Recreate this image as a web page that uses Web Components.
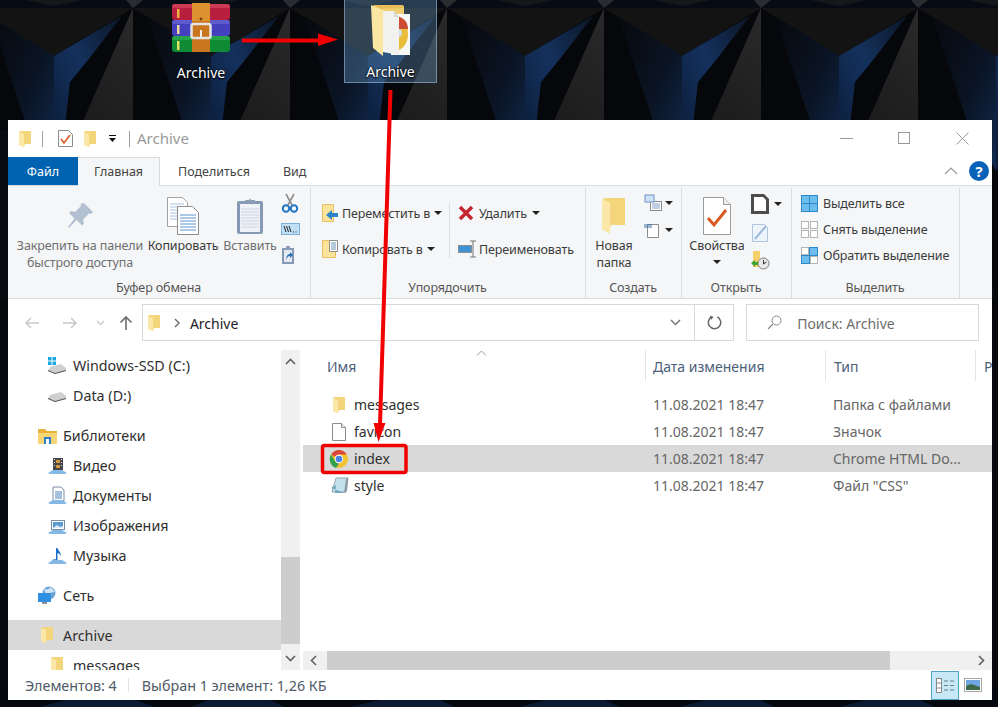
<!DOCTYPE html>
<html lang="ru">
<head>
<meta charset="utf-8">
<title>Archive</title>
<style>
  html, body { margin: 0; height: 100%; }
  body { width: 998px; height: 707px; overflow: hidden; position: relative; background: #07090e; font: 13px/17px "Noto Sans", "Open Sans", sans-serif; color: #3b3b3b; }
</style>
</head>
<body>
<desk-wallpaper></desk-wallpaper>
<desk-icon style="left:155px;top:0" label="Archive"><ex-icon name="rar" size="60x50"></ex-icon></desk-icon>
<desk-icon style="left:345px;top:0" label="Archive" selected><ex-icon name="bigfolder" size="40x53"></ex-icon></desk-icon>

<ex-window>
  <ex-titlebar title-text="Archive"></ex-titlebar>
  <ex-tabs></ex-tabs>
  <ex-ribbon>
    <rb-group label="Буфер обмена" style="width:302px">
      <rb-big style="margin-left:9px;width:126px;white-space:nowrap" dim><ex-icon slot="icon" name="pin" size="28x28"></ex-icon>Закрепить на панели<br>быстрого доступа</rb-big>
      <rb-big style="margin-left:4px;width:72px"><ex-icon slot="icon" name="copy" size="32x38"></ex-icon>Копировать</rb-big>
      <rb-big style="margin-left:5px;width:52px" dim><ex-icon slot="icon" name="paste" size="28x38"></ex-icon>Вставить</rb-big>
      <rb-col style="margin-left:5px;width:20px;padding-top:2px" gap="26">
        <rb-small><ex-icon name="scissors" size="18x20"></ex-icon></rb-small>
        <rb-small><ex-icon name="pathcopy" size="19x12"></ex-icon></rb-small>
        <rb-small><ex-icon name="shortcut" size="14x20"></ex-icon></rb-small>
      </rb-col>
    </rb-group>
    <rb-group label="Упорядочить" style="width:274px">
      <rb-col style="margin-left:11px;width:127px;padding-top:7px" gap="36">
        <rb-small gap="4"><ex-icon name="moveto" size="16x18"></ex-icon>Переместить в<rb-caret></rb-caret></rb-small>
        <rb-small gap="4"><ex-icon name="copyto" size="16x18"></ex-icon>Копировать в<rb-caret></rb-caret></rb-small>
      </rb-col>
      <rb-sep></rb-sep>
      <rb-col style="margin-left:8px;padding-top:7px" gap="36">
        <rb-small gap="5"><ex-icon name="del" size="16x16"></ex-icon>Удалить<rb-caret></rb-caret></rb-small>
        <rb-small gap="3"><ex-icon name="rename" size="18x18"></ex-icon>Переименовать</rb-small>
      </rb-col>
    </rb-group>
    <rb-group label="Создать" style="width:95px">
      <rb-big style="margin-left:3px;width:50px"><ex-icon slot="icon" name="newfolder" size="24x36"></ex-icon>Новая папка</rb-big>
      <rb-col style="margin-left:5px;padding-top:1px" gap="27">
        <rb-small gap="3"><ex-icon name="newitem" size="18x17"></ex-icon><rb-caret></rb-caret></rb-small>
        <rb-small gap="3"><ex-icon name="easy" size="18x17"></ex-icon><rb-caret></rb-caret></rb-small>
      </rb-col>
    </rb-group>
    <rb-group label="Открыть" style="width:109px">
      <rb-big style="margin-left:7px;width:56px"><ex-icon slot="icon" name="props" size="28x38"></ex-icon>Свойства<rb-caret block></rb-caret></rb-big>
      <rb-col style="margin-left:5px;padding-top:2px" gap="28">
        <rb-small gap="4"><ex-icon name="open" size="20x20"></ex-icon><rb-caret></rb-caret></rb-small>
        <rb-small gap="4"><ex-icon name="edit" size="20x20"></ex-icon></rb-small>
        <rb-small gap="4"><ex-icon name="history" size="20x20"></ex-icon></rb-small>
      </rb-col>
    </rb-group>
    <rb-group label="Выделить" style="width:167px">
      <rb-col style="margin-left:9px;padding-top:2px" gap="26">
        <rb-small gap="5"><ex-icon name="selall" size="17x17"></ex-icon>Выделить все</rb-small>
        <rb-small gap="5"><ex-icon name="selnone" size="17x17"></ex-icon>Снять выделение</rb-small>
        <rb-small gap="5"><ex-icon name="selinv" size="17x17"></ex-icon>Обратить выделение</rb-small>
      </rb-col>
    </rb-group>
  </ex-ribbon>
  <ex-addressbar path="Archive" search="Поиск: Archive"></ex-addressbar>
  <ex-main>
    <nav-pane slot="nav">
      <nav-item level="1" icon="drivec" size="20x18">Windows-SSD (C:)</nav-item>
      <nav-item level="1" icon="drived" size="20x18">Data (D:)</nav-item>
      <nav-item level="0" icon="libs" size="19x17" spaced>Библиотеки</nav-item>
      <nav-item level="1" icon="video" size="19x19">Видео</nav-item>
      <nav-item level="1" icon="docs" size="19x19">Документы</nav-item>
      <nav-item level="1" icon="pics" size="19x19">Изображения</nav-item>
      <nav-item level="1" icon="music" size="19x19">Музыка</nav-item>
      <nav-item level="0" icon="net" size="19x19" spaced>Сеть</nav-item>
      <nav-item level="0" icon="folder" size="12x16" spaced selected>Archive</nav-item>
      <nav-item level="1" icon="folder" size="12x16">messages</nav-item>
    </nav-pane>
    <file-list slot="files">
      <file-row icon="folder" size="12x16" name="messages" date="11.08.2021 18:47" type="Папка с файлами"></file-row>
      <file-row icon="file" size="14x18" name="favicon" date="11.08.2021 18:47" type="Значок"></file-row>
      <file-row icon="chrome" size="18x18" name="index" date="11.08.2021 18:47" type="Chrome HTML Do..." selected></file-row>
      <file-row icon="css" size="19x17" name="style" date="11.08.2021 18:47" type="Файл &quot;CSS&quot;"></file-row>
    </file-list>
  </ex-main>
  <ex-status count="Элементов: 4" sel="Выбран 1 элемент: 1,26 КБ"></ex-status>
</ex-window>

<red-marks></red-marks>

<script>
const ICONS = {
  folder: `<path d="M1 0h11v13H6l-1 3-5-2V1z" fill="#f3d57c"/><path d="M0 1l5 2v13l-5-2z" fill="#fbe8a8"/>`,
  rar: `<rect x="1" y="1" width="58" height="16" rx="3" fill="#b81f3e"/><rect x="1" y="17" width="58" height="16" rx="3" fill="#4540bd"/><rect x="1" y="33" width="58" height="16" rx="3" fill="#0f8a35"/>
    <rect x="1" y="1" width="58" height="4" rx="2" fill="#e0566c" opacity=".5"/><rect x="1" y="17" width="58" height="4" rx="2" fill="#7a74e0" opacity=".5"/><rect x="1" y="33" width="58" height="4" rx="2" fill="#3dbb62" opacity=".5"/>
    <rect x="6" y="6" width="2.5" height="9" fill="#f0b040"/><rect x="6" y="22" width="2.5" height="9" fill="#f0d8a0"/><rect x="6" y="38" width="2.5" height="9" fill="#e8e060"/>
    <rect x="21" y="0" width="18" height="49" fill="#c9761f"/><rect x="21" y="0" width="18" height="18" fill="#eba53c" opacity=".6"/><rect x="20.500" y="21" width="19" height="14" rx="2" fill="none" stroke="#e4e4e4" stroke-width="2.500"/><rect x="29" y="27" width="2" height="7" fill="#eee"/><circle cx="30" cy="16" r="1.400" fill="#7a3f08"/>`,
  bigfolder: `<path d="M2 3h31v40H2z" fill="#f0cd6e"/><path d="M2 3l1-1h29l1 3-31 1z" fill="#e7bd58"/><path d="M20 11h19v41H20z" fill="#f7f7f6"/><path d="M23 13c9 0 14 8 14 18s-6 17-14 17z" fill="#e9bc3c"/><path d="M23 13c8 0 14 5 14 13H23z" fill="#cd4a34"/><circle cx="27" cy="30" r="4" fill="#cfe0ee"/><path d="M12 8h11l5 6v38l-16-3z" fill="#f1f1f0"/><path d="M23 8v6h5z" fill="#d8d8d8"/><path d="M0 2l12 5v46L2 45z" fill="#fbe7a2"/>`,
  pin: `<path d="M18 1l9 9-2 2-2-.5-6 6 1 4-2 2-5.500-5.500L3 26l-1-1 6.500-8.500L3 11l2-2 4 1 6-6-.5-2z" fill="#b3c0d2"/>`,
  copy: `<path d="M.5.500h15l5 5v24H.5z" fill="#fff" stroke="#a3a3a3"/><path d="M3 7h14M3 10h14M3 13h14M3 16h14M3 19h14M3 22h14" stroke="#a6c3e4"/><path d="M10.500 9.500h15l6 6v22h-21z" fill="#fff" stroke="#8d8d8d"/><path d="M13 18h16M13 21h16M13 24h16M13 27h16M13 30h16M13 33h16" stroke="#5d94d2"/>`,
  paste: `<rect x="1" y="4" width="26" height="33" rx="2" fill="#8599b4"/><rect x="4" y="7" width="20" height="28" fill="#eef1f6"/><path d="M5 12h18M5 15h18M5 18h18M5 21h18M5 24h18M5 27h18M5 30h18" stroke="#cdd5e2"/><path d="M9 6V3h4l1-2 1 2h4v3z" fill="#8d9fb8"/>`,
  scissors: `<path d="M5 1l6 11M13 1L7 12" stroke="#8f8f8f" stroke-width="1.600" fill="none"/><circle cx="5" cy="15.500" r="3.200" fill="none" stroke="#1f77c4" stroke-width="2"/><circle cx="13" cy="15.500" r="3.200" fill="none" stroke="#1f77c4" stroke-width="2"/>`,
  pathcopy: `<rect x=".5" y=".5" width="18" height="11" fill="#bfe0f6" stroke="#7fb0d8"/><path d="M3 3l2 6M5.500 3l2 6M8 3l2 6" stroke="#222" stroke-width="1"/><path d="M12 9h1M14.500 9h1" stroke="#222"/>`,
  shortcut: `<rect x="1" y="3" width="12" height="16" fill="#8599b4"/><rect x="3" y="5" width="8" height="12" fill="#e4e9f1"/><path d="M5 1h4v3H5z" fill="#8d9fb8"/><path d="M5 15c0-4 2-6 4-6V7l3 3-3 3v-2c-2 0-3 1-4 4z" fill="#2f6fb5"/>`,
  moveto: `<path d="M.5.500h11v17H.5z" fill="#fbe39a" stroke="#e8c060"/><path d="M16 9h-6V6l-6 5 6 5v-3h6z" fill="#2b83c9"/>`,
  copyto: `<path d="M.5.500h13v17H.5z" fill="#fbe39a" stroke="#e8c060"/><path d="M7.500.500h8v11h-8z" fill="#fff" stroke="#8d8d8d"/><path d="M9 3h5M9 5h5M9 7h5M9 9h5" stroke="#6a90b8"/>`,
  del: `<path d="M2 2l12 12M14 2L2 14" stroke="#c3242f" stroke-width="3.400"/>`,
  rename: `<rect x=".5" y="5.500" width="13" height="7" fill="#3f93d8" stroke="#8d8d8d"/><path d="M15 1v16M12 1h6M12 17h6" stroke="#777" fill="none"/>`,
  newfolder: `<path d="M3 0h20v27H9l-2 8-7-4V2z" fill="#f3d57c"/><path d="M0 1l8 4v30l-8-4z" fill="#fbe8a8"/>`,
  newitem: `<rect x="6.500" y="7.500" width="11" height="9" fill="#fff" stroke="#8c8c8c"/><path d="M8 10h8M8 12h8M8 14h8" stroke="#7f9fc8"/><rect x="1" y="1" width="9" height="7" fill="#cfe2f5" stroke="#6d96c6"/>`,
  easy: `<path d="M3.500 3.500h11v13h-11z" fill="#fff" stroke="#8c8c8c"/><path d="M0 4h8M0 6h8" stroke="#3a6fae"/>`,
  props: `<path d="M.5.500h20l7 7v30H.5z" fill="#fff" stroke="#9a9a9a"/><path d="M20.500.500v7h7" fill="#eee" stroke="#9a9a9a"/><path d="M5 21l6 7L23 13" fill="none" stroke="#d85a22" stroke-width="3"/>`,
  open: `<path d="M1 0h13l5 5v15H1z" fill="#4d4d4d"/><path d="M4 3h9l3 3v11H4z" fill="#fff"/>`,
  edit: `<path d="M2.500 2.500h12l3 3v14h-15z" fill="#eef4fb" stroke="#b0c4dc"/><path d="M5 17L16 4" stroke="#9db9d8" stroke-width="2"/>`,
  history: `<path d="M3 1h7v16H3z" fill="#f5cf6a"/><circle cx="13.500" cy="13.500" r="5.500" fill="#e8e8e8" stroke="#7a7a7a"/><path d="M13.500 10v4l3-2" fill="none" stroke="#333"/><path d="M1 13l4-3v2h3v3H5v2z" fill="#3fa52f"/>`,
  selall: `<g fill="#6cbcee" stroke="#2d8ac8"><rect x=".5" y=".5" width="8" height="8"/><rect x="8.500" y=".5" width="8" height="8"/><rect x=".5" y="8.500" width="8" height="8"/><rect x="8.500" y="8.500" width="8" height="8"/></g>`,
  selnone: `<g fill="#fff" stroke="#b5b5b5"><rect x=".5" y=".5" width="7" height="7"/><rect x="9.500" y=".5" width="7" height="7"/><rect x=".5" y="9.500" width="7" height="7"/><rect x="9.500" y="9.500" width="7" height="7"/></g>`,
  selinv: `<g stroke="#2d8ac8"><rect x=".5" y=".5" width="7" height="7" fill="#fff" stroke="#b5b5b5"/><rect x="8.500" y=".5" width="8" height="8" fill="#6cbcee"/><rect x=".5" y="8.500" width="8" height="8" fill="#6cbcee"/><rect x="9.500" y="9.500" width="7" height="7" fill="#fff" stroke="#b5b5b5"/></g>`,
  drivec: `<path d="M3 11l11-3 5 4v3l-11 3-7-3z" fill="#cfcfcf"/><path d="M1 14l7 3 11-3v1l-11 3-7-3z" fill="#555"/><path d="M1 1h3.500v3.500H1zM5.500 1H9v3.500H5.500zM1 5.500h3.500V9H1zM5.500 5.500H9V9H5.500z" fill="#18a9e0"/>`,
  drived: `<path d="M3 9l11-3 5 4v3l-11 3-7-3z" fill="#cfcfcf"/><path d="M1 12l7 3 11-3v1l-11 3-7-3z" fill="#555"/>`,
  libs: `<path d="M0 2h7l2 2h10v3H0z" fill="#e9b33a"/><path d="M0 6h19v11H0z" fill="#f8d675"/><path d="M6 10h7v7H6z" fill="#2f7dc4"/><path d="M8 12h3v5H8z" fill="#fff"/>`,
  video: `<path d="M5 2h10v12H5z" fill="#46474d"/><path d="M8 4h4v3H8zM8 9h4v3H8z" fill="#d39b3a"/><path d="M6 3h1v1H6zM6 6h1v1H6zM6 9h1v1H6zM13 3h1v1h-1zM13 6h1v1h-1zM13 9h1v1h-1z" fill="#ddd"/><path d="M0 17l5-3h9l5 3-2 1H2z" fill="#84b9e6"/>`,
  docs: `<path d="M5 1h8l3 3v11H5z" fill="#fff" stroke="#7a8ea8"/><path d="M7 6h7M7 8h7M7 10h7M7 12h7" stroke="#4b82bd"/><path d="M0 17l5-3h9l5 3-2 1H2z" fill="#84b9e6"/>`,
  pics: `<rect x="3.500" y="4.500" width="13" height="9" fill="#fff" stroke="#7a8ea8"/><rect x="5" y="6" width="10" height="6" fill="#5a9bd0"/><path d="M5 12l4-3 3 2 3-1v2z" fill="#dce9f2"/><path d="M0 17l5-3h9l5 3-2 1H2z" fill="#84b9e6"/>`,
  music: `<path d="M8 2h1.500c.5 3 4 4 3 8-.5-2-2-3-3-3v7c0 2-2 3-4 3s-2-3 0-3.500c1-.3 2-.3 2.500 0z" fill="#1a6fc8"/><path d="M0 17l5-3h9l5 3-2 1H2z" fill="#84b9e6"/>`,
  net: `<circle cx="11" cy="7" r="6.500" fill="#6aa4d8"/><path d="M6 3c3 1 5 0 7-2 1 2 3 3 4 5-3 0-6 1-7 4-2-1-3-4-4-7z" fill="#cfe2f2"/><rect x="0" y="7" width="13" height="9" fill="#2f8fe0"/><path d="M4 16h5v2H4z" fill="#8d8d8d"/>`,
  file: `<path d="M.5.500h9l4 4v13H.5z" fill="#fff" stroke="#8c8c8c"/><path d="M9.500.500v4h4" fill="#eee" stroke="#8c8c8c"/>`,
  chrome: `<circle cx="9" cy="9" r="9" fill="#f4c430"/><path d="M9 0a9 9 0 0 1 7.800 4.500H9a4.500 4.500 0 0 0-3.900 2.200L1.200 4.500A9 9 0 0 1 9 0z" fill="#d9473c"/><path d="M1.200 4.500L5.100 11.200A4.500 4.500 0 0 0 9 13.500L6 18a9 9 0 0 1-4.800-13.500z" fill="#32a04f"/><circle cx="9" cy="9" r="4.200" fill="#fff"/><circle cx="9" cy="9" r="3.300" fill="#4a84e6"/>`,
  css: `<path d="M6 1h12l-2 14H2z" fill="#c3e2ee" stroke="#8fa6b0"/><path d="M1 11l5-3-1 8h10" fill="#6fa8bc"/><path d="M16 2l2-1-1 13-3 2z" fill="#8b9aa3"/>`
};

// shared icon element, size is given as "WxH"
class ExIcon extends HTMLElement {
  connectedCallback() {
    const [w, h] = this.getAttribute("size").split("x");
    const root = this.shadowRoot || this.attachShadow({ mode: "open" });
    root.innerHTML = `<style>:host{display:block;flex:none;width:${w}px;height:${h}px}svg{display:block;overflow:visible}</style>
      <svg width="${w}" height="${h}" viewBox="0 0 ${w} ${h}">${ICONS[this.getAttribute("name")] || ""}</svg>`;
  }
}
customElements.define("ex-icon", ExIcon);

class DeskWallpaper extends HTMLElement {
  constructor() {
    super();
    this.attachShadow({ mode: "open" }).innerHTML = `
    <style>:host{position:absolute;inset:0;display:block}svg{display:block}</style>
    <svg width="998" height="707">
      <defs>
        <linearGradient id="b1" x1="0" y1="0" x2="1" y2="1"><stop offset="0" stop-color="#07090d"/><stop offset=".55" stop-color="#0a1424"/><stop offset="1" stop-color="#122a50"/></linearGradient>
        <linearGradient id="b2" x1="0" y1="1" x2="1" y2="0"><stop offset="0" stop-color="#0a1a33"/><stop offset=".55" stop-color="#14315d"/><stop offset="1" stop-color="#0b1524"/></linearGradient>
        <linearGradient id="g1" x1="1" y1="0" x2=".6" y2="1"><stop offset="0" stop-color="#2a2a2a"/><stop offset="1" stop-color="#1d1d1d"/></linearGradient>
        <pattern id="tile" x="-24" y="0" width="157" height="707" patternUnits="userSpaceOnUse">
          <rect width="157" height="707" fill="#05070b"/>
          <rect width="157" height="8" fill="#070b14"/>
          <path d="M50 0h56l-28 6z" fill="#15171b"/>
          <path d="M0 0h10L0 8zM157 0h-7l7 8z" fill="#2a2c30"/>
          <path d="M0 8h157L78 56z" fill="#131313"/>
          <path d="M14 16L78 56V170L52 130z" fill="url(#b1)"/>
          <path d="M78 56L146 16 112 60 94 82 84 170 78 170z" fill="url(#b2)"/>
          <path d="M157 8V130H103z" fill="url(#g1)"/>
          <path d="M157 130V300H100L103 130z" fill="#0a0d13"/>
          <path d="M0 130H50L78 300H0z" fill="#080b10"/>
          <path d="M0 130L20 190 0 300z" fill="#122a50"/>
        </pattern>
      </defs>
      <rect width="998" height="707" fill="url(#tile)"/>
      <rect y="320" width="998" height="387" fill="#07090e"/>
      <path d="M0 690h998v17H0z" fill="#05080f"/>
      <path d="M40 707l25-7h70l20 7zM190 707l20-7h60l15 7zM350 707l30-7h60l15 7zM520 707l25-7h60l15 7zM680 707l25-7h55l15 7zM840 707l25-7h55l15 7z" fill="#0c1a33"/>
    </svg>`;
  }
}
customElements.define("desk-wallpaper", DeskWallpaper);

class DeskIcon extends HTMLElement {
  constructor() {
    super();
    this.attachShadow({ mode: "open" }).innerHTML = `
    <style>
      :host{position:absolute;display:flex;flex-direction:column;align-items:center;width:92px;height:83px;box-sizing:border-box;font-size:14px;color:#fff}
      :host([selected]){background:rgba(120,175,225,.3);border:1px solid rgba(160,195,225,.55);border-top:0;margin-left:-1px;width:93px}
      .pic{height:60px;padding-top:3px;box-sizing:border-box}
      .name{line-height:20px;margin-top:3px;text-shadow:0 1px 2px #000,0 0 2px #000}
    </style>
    <div class="pic"><slot></slot></div><div class="name"></div>`;
  }
  connectedCallback() { this.shadowRoot.querySelector(".name").textContent = this.getAttribute("label"); }
}
customElements.define("desk-icon", DeskIcon);

class ExWindow extends HTMLElement {
  constructor() {
    super();
    this.attachShadow({ mode: "open" }).innerHTML = `
    <style>:host{position:absolute;left:8px;top:120px;width:984px;height:580px;display:flex;flex-direction:column;background:#fff;overflow:hidden}</style>
    <slot></slot>`;
  }
}
customElements.define("ex-window", ExWindow);

class ExTitlebar extends HTMLElement {
  constructor() {
    super();
    this.attachShadow({ mode: "open" }).innerHTML = `
    <style>
      :host{display:flex;align-items:center;height:37px;flex:none;box-sizing:border-box;padding-left:11px;color:#9a9a9a;font-size:15px}
      .sep{width:1px;height:16px;background:#9f9f9f}
      .drop{width:9px;height:8px}
      .ttl{margin-left:7px;flex:1}
      .btn{width:58px;display:flex;justify-content:center}
    </style>
    <ex-icon name="folder" size="12x16"></ex-icon>
    <div class="sep" style="margin-left:11px"></div>
    <svg width="15" height="17" viewBox="0 0 15 17" style="margin-left:15px"><path d="M.5.500h10l4 4v12H.5z" fill="#fff" stroke="#8d8d8d"/><path d="M3 9l3 4 6-8" fill="none" stroke="#d85a22" stroke-width="1.600"/></svg>
    <span style="width:11px"></span>
    <ex-icon name="folder" size="12x16"></ex-icon>
    <svg class="drop" viewBox="0 0 9 8" style="margin-left:12px"><path d="M1 .5h7" stroke="#111"/><path d="M1 3h7L4.500 7z" fill="#111"/></svg>
    <div class="sep" style="margin-left:12px"></div>
    <div class="ttl"></div>
    <div class="btn"><svg width="13" height="13"><path d="M0 6.500h13" stroke="#999"/></svg></div>
    <div class="btn"><svg width="13" height="13"><rect x=".5" y=".5" width="11" height="11" fill="none" stroke="#999"/></svg></div>
    <div class="btn" style="margin-right:1px"><svg width="13" height="13"><path d="M.5.500l12 12M12.500.500l-12 12" stroke="#999"/></svg></div>`;
  }
  connectedCallback() { this.shadowRoot.querySelector(".ttl").textContent = this.getAttribute("title-text"); }
}
customElements.define("ex-titlebar", ExTitlebar);

class ExTabs extends HTMLElement {
  constructor() {
    super();
    this.attachShadow({ mode: "open" }).innerHTML = `
    <style>
      :host{display:flex;height:29px;flex:none;box-sizing:border-box;border-bottom:1px solid #d8dadd;align-items:stretch;position:relative;font-size:12.5px;color:#444}
      div{display:flex;align-items:center;justify-content:center;box-sizing:border-box}
      .file{width:70px;background:#0063b1;color:#fff;height:28px}
      .on{width:82px;background:#f5f6f7;border:1px solid #d8dadd;border-bottom:0;height:29px;border-left:0;padding-bottom:2px}
      .tab{padding:0 18px}
      .r{margin-left:auto;padding-right:3px;gap:11px}
      .help{width:20px;height:20px;border-radius:50%;background:#0a62b8;color:#fff;font:700 15px/20px "Noto Sans",sans-serif}
    </style>
    <div class="file">Файл</div><div class="on">Главная</div><div class="tab">Поделиться</div><div class="tab" style="padding-left:15px">Вид</div>
    <div class="r"><svg width="14" height="8"><path d="M1 7l6-6 6 6" fill="none" stroke="#999" stroke-width="1.200"/></svg><div class="help">?</div></div>`;
  }
}
customElements.define("ex-tabs", ExTabs);

class ExRibbon extends HTMLElement {
  constructor() {
    super();
    this.attachShadow({ mode: "open" }).innerHTML = `
    <style>:host{display:flex;height:112px;flex:none;background:#f5f6f7;border-bottom:1px solid #dadada;box-sizing:content-box}</style>
    <slot></slot>`;
  }
}
customElements.define("ex-ribbon", ExRibbon);

class RbGroup extends HTMLElement {
  constructor() {
    super();
    this.attachShadow({ mode: "open" }).innerHTML = `
    <style>
      :host{display:flex;flex-direction:column;flex:none;box-sizing:content-box;height:110px;margin-top:2px;border-right:1px solid #dcdee0;font-size:12.5px;letter-spacing:-.12px}
      .body{flex:1;display:flex;align-items:flex-start;min-height:0}
      .lbl{text-align:center;line-height:20px;color:#555;height:20px;padding-right:1px}
    </style>
    <div class="body"><slot></slot></div><div class="lbl"></div>`;
  }
  connectedCallback() { this.shadowRoot.querySelector(".lbl").textContent = this.getAttribute("label"); }
}
customElements.define("rb-group", RbGroup);

class RbBig extends HTMLElement {
  constructor() {
    super();
    this.attachShadow({ mode: "open" }).innerHTML = `
    <style>
      :host{display:flex;flex-direction:column;align-items:center;flex:none;text-align:center;line-height:17px;color:#3b3b3b}
      :host([dim]){color:#6f6f6f}
      .pic{height:49px;padding-top:6px;box-sizing:border-box;display:flex;align-items:center}
    </style>
    <div class="pic"><slot name="icon"></slot></div><div><slot></slot></div>`;
  }
}
customElements.define("rb-big", RbBig);

class RbCol extends HTMLElement {
  constructor() {
    super();
    this.attachShadow({ mode: "open" }).innerHTML = `
    <style>:host{display:grid;flex:none;justify-items:start;align-items:center}</style><slot></slot>`;
  }
  connectedCallback() { this.style.gridAutoRows = this.getAttribute("gap") + "px"; }
}
customElements.define("rb-col", RbCol);

class RbSmall extends HTMLElement {
  constructor() {
    super();
    this.attachShadow({ mode: "open" }).innerHTML = `
    <style>:host{display:flex;align-items:center;white-space:nowrap;color:#3b3b3b}</style><slot></slot>`;
  }
  connectedCallback() { this.style.gap = (this.getAttribute("gap") || 0) + "px"; }
}
customElements.define("rb-small", RbSmall);

class RbCaret extends HTMLElement {
  constructor() {
    super();
    this.attachShadow({ mode: "open" }).innerHTML = `
    <style>:host{display:block;flex:none;width:0;height:0;margin-left:0;border:4px solid transparent;border-top-color:#222;border-bottom:0}
    :host([block]){margin:6px auto 0}</style>`;
  }
}
customElements.define("rb-caret", RbCaret);

class RbSep extends HTMLElement {
  constructor() {
    super();
    this.attachShadow({ mode: "open" }).innerHTML = `<style>:host{display:block;flex:none;width:1px;height:55px;margin-top:15px;background:#dcdee0}</style>`;
  }
}
customElements.define("rb-sep", RbSep);

class ExAddressbar extends HTMLElement {
  constructor() {
    super();
    this.attachShadow({ mode: "open" }).innerHTML = `
    <style>
      :host{display:flex;height:46px;flex:none;box-sizing:border-box;padding:5px 13px 4px 0;align-items:stretch;font-size:14px}
      .nav{width:134px;display:flex;align-items:center;box-sizing:border-box;padding-left:16px}
      .box{border:1px solid #d9d9d9;display:flex;align-items:center;box-sizing:border-box}
      .addr{width:593px;padding-left:5px;color:#222}
      .path{flex:1;margin-left:9px;padding-top:2px}
      .cell{width:38px;align-self:stretch;display:flex;align-items:center;justify-content:center;border-left:1px solid #d9d9d9}
      .cell.first{border:0;width:37px}
      .search{width:233px;margin-left:12px;padding-left:20px;color:#6d6d6d;gap:15px}
      .q{padding-top:2px}
    </style>
    <div class="nav">
      <svg width="16" height="12"><path d="M15 6H2M7 1L2 6l5 5" fill="none" stroke="#c9c9c9" stroke-width="1.500"/></svg>
      <svg width="16" height="12" style="margin-left:22px"><path d="M1 6h13M9 1l5 5-5 5" fill="none" stroke="#c9c9c9" stroke-width="1.500"/></svg>
      <svg width="9" height="6" style="margin-left:18px"><path d="M1 1l3.500 3.500L8 1" fill="none" stroke="#c9c9c9" stroke-width="1.300"/></svg>
      <svg width="14" height="16" style="margin-left:14px"><path d="M7 15V2M1.500 7.500L7 2l5.500 5.500" fill="none" stroke="#6e6e6e" stroke-width="1.600"/></svg>
    </div>
    <div class="box addr">
      <ex-icon name="folder" size="12x16"></ex-icon>
      <svg width="7" height="10" style="margin-left:14px"><path d="M1 1l4 4-4 4" fill="none" stroke="#6a6a6a" stroke-width="1.400"/></svg>
      <div class="path"></div>
      <div class="cell first"><svg width="11" height="7"><path d="M1 1l4.500 4.500L10 1" fill="none" stroke="#777" stroke-width="1.500"/></svg></div>
      <div class="cell"><svg width="15" height="15" viewBox="0 0 15 15"><path d="M5 1.800A6.200 6.200 0 1 0 10.500 2" fill="none" stroke="#666" stroke-width="1.500"/><path d="M3 .5l3.500 1.500L4 5z" fill="#666"/></svg></div>
    </div>
    <div class="box search">
      <svg width="15" height="15"><circle cx="9.500" cy="5.500" r="4.500" fill="none" stroke="#888"/><path d="M6 9l-5 5" stroke="#888" stroke-width="1.200"/></svg>
      <div class="q"></div>
    </div>`;
  }
  connectedCallback() {
    this.shadowRoot.querySelector(".path").textContent = this.getAttribute("path");
    this.shadowRoot.querySelector(".q").textContent = this.getAttribute("search");
  }
}
customElements.define("ex-addressbar", ExAddressbar);

class ExMain extends HTMLElement {
  constructor() {
    super();
    this.attachShadow({ mode: "open" }).innerHTML = `
    <style>
      :host{display:flex;height:325px;flex:none;overflow:hidden}
      ::slotted(nav-pane){width:273px}
      .vs{width:19px;flex:none;margin-top:5px;background:#f0f0f0;display:flex;flex-direction:column;align-items:center;justify-content:space-between;position:relative}
      .vs svg{margin:8px 0}
      .thumb{position:absolute;left:0;right:0;top:207px;height:87px;background:#cdcdcd}
      .gap{width:3px;flex:none}
    </style>
    <slot name="nav"></slot>
    <div class="vs">
      <svg width="11" height="7"><path d="M1 6l4.500-4.500L10 6" fill="none" stroke="#606060" stroke-width="1.600"/></svg>
      <div class="thumb"></div>
      <svg width="11" height="7"><path d="M1 1l4.500 4.500L10 1" fill="none" stroke="#606060" stroke-width="1.600"/></svg>
    </div>
    <div class="gap"></div>
    <slot name="files"></slot>`;
  }
}
customElements.define("ex-main", ExMain);

class NavPane extends HTMLElement {
  constructor() {
    super();
    this.attachShadow({ mode: "open" }).innerHTML = `
    <style>:host{display:block;flex:none;overflow:hidden;padding-top:5px;box-sizing:border-box;height:325px}</style><slot></slot>`;
  }
}
customElements.define("nav-pane", NavPane);

class NavItem extends HTMLElement {
  constructor() {
    super();
    this.attachShadow({ mode: "open" }).innerHTML = `
    <style>
      :host{display:flex;align-items:center;height:30px;box-sizing:border-box;font-size:14.3px;color:#2f2f2f}
      :host([spaced]){margin-top:10px}
      :host([selected]){background:#d9d9d9}
      .pic{width:20px;display:flex;justify-content:center;margin-right:6px}
    </style>
    <div class="pic"></div><slot></slot>`;
  }
  connectedCallback() {
    const lvl = this.getAttribute("level") === "1" ? 40 : 30;
    this.style.paddingLeft = lvl - 1 + "px";
    this.shadowRoot.querySelector(".pic").innerHTML = `<ex-icon name="${this.getAttribute("icon")}" size="${this.getAttribute("size")}"></ex-icon>`;
  }
}
customElements.define("nav-item", NavItem);

class FileList extends HTMLElement {
  constructor() {
    super();
    this.attachShadow({ mode: "open" }).innerHTML = `
    <style>
      :host{display:flex;flex-direction:column;flex:1;min-width:0;overflow:hidden;height:325px;font-size:14px}
      .head{display:flex;height:31px;margin-top:5px;flex:none;color:#4c607a}
      .h{box-sizing:border-box;display:flex;align-items:center;padding:2px 0 0 8px;border-right:1px solid #e5e5e5;position:relative;overflow:hidden}
      .h.a{width:343px;padding-left:24px}
      .h.b{width:180px;padding-left:7px}
      .h.c{width:150px}
      .h.d{flex:1;border:0;min-width:0}
      .sort{position:absolute;left:173px;top:0}
      .rows{flex:1;padding-top:10px;min-height:0}
      .hs{height:19px;flex:none;background:#f0f0f0;display:flex;align-items:center;justify-content:space-between;padding:0 7px;position:relative}
      .hs i{position:absolute;left:24px;top:0;bottom:0;width:563px;background:#cdcdcd}
    </style>
    <div class="head">
      <div class="h a">Имя<svg class="sort" width="11" height="6"><path d="M1 5.500l4.500-4.500L10 5.500" fill="none" stroke="#999"/></svg></div>
      <div class="h b">Дата изменения</div><div class="h c">Тип</div><div class="h d">Р</div>
    </div>
    <div class="rows"><slot></slot></div>
    <div class="hs">
      <svg width="7" height="11"><path d="M6 1L1.500 5.500 6 10" fill="none" stroke="#606060" stroke-width="1.600"/></svg>
      <i></i>
      <svg width="7" height="11"><path d="M1 1l4.500 4.500L1 10" fill="none" stroke="#606060" stroke-width="1.600"/></svg>
    </div>`;
  }
}
customElements.define("file-list", FileList);

class FileRow extends HTMLElement {
  constructor() {
    super();
    this.attachShadow({ mode: "open" }).innerHTML = `
    <style>
      :host{display:flex;align-items:center;height:27px;color:#666;white-space:nowrap}
      :host([selected]){background:#d9d9d9}
      .pic{width:51px;padding-left:26px;box-sizing:border-box;display:flex;justify-content:center;padding-right:5px}
      .n{width:291px;color:#2f2f2f;box-sizing:border-box}
      .d{width:180px;padding-left:8px;box-sizing:border-box}
      .t{padding-left:8px}
    </style>
    <div class="pic"></div><div class="n"></div><div class="d"></div><div class="t"></div>`;
  }
  connectedCallback() {
    const s = this.shadowRoot;
    s.querySelector(".pic").innerHTML = `<ex-icon name="${this.getAttribute("icon")}" size="${this.getAttribute("size")}"></ex-icon>`;
    s.querySelector(".n").textContent = this.getAttribute("name");
    s.querySelector(".d").textContent = this.getAttribute("date");
    s.querySelector(".t").textContent = this.getAttribute("type");
  }
}
customElements.define("file-row", FileRow);

class ExStatus extends HTMLElement {
  constructor() {
    super();
    this.attachShadow({ mode: "open" }).innerHTML = `
    <style>
      :host{display:flex;align-items:center;height:30px;flex:none;font-size:14.3px;color:#4f5b68;padding-left:17px;box-sizing:border-box}
      .sep{width:1px;height:14px;background:#e3e3e3;margin:0 13px 0 11px}
      .sel{flex:1}
      .v1{width:28px;height:29px;box-sizing:border-box;background:#c6e8f7;border:1px solid #52a3c0;display:flex;align-items:center;justify-content:center;margin-bottom:-1px}
      .v2{margin:0 10px 0 5px;display:block}
    </style>
    <div class="c"></div><div class="sep"></div><div class="sel"></div>
    <div class="v1"><svg width="18" height="15"><rect x=".5" y=".5" width="5" height="14" fill="#fff" stroke="#888"/><path d="M1 5h4M1 10h4" stroke="#888"/><path d="M8 3h4M14 3h4M8 7.500h4M14 7.500h4M8 12h4M14 12h4" stroke="#6a7f8a"/></svg></div>
    <svg class="v2" width="18" height="14"><rect x=".5" y=".5" width="17" height="13" fill="#fff" stroke="#a6a6a6"/><rect x="2" y="2" width="14" height="10" fill="#6fa6e0"/><path d="M2 8l5-2 9 3v3H2z" fill="#3f6a4a"/></svg>`;
  }
  connectedCallback() {
    this.shadowRoot.querySelector(".c").textContent = this.getAttribute("count");
    this.shadowRoot.querySelector(".sel").textContent = this.getAttribute("sel");
  }
}
customElements.define("ex-status", ExStatus);

// the red arrows and box drawn over the screenshot
class RedMarks extends HTMLElement {
  constructor() {
    super();
    this.attachShadow({ mode: "open" }).innerHTML = `
    <style>:host{position:absolute;inset:0;display:block;pointer-events:none}svg{display:block}</style>
    <svg width="998" height="707">
      <path d="M242 40.500H320" stroke="#f00000" stroke-width="4"/>
      <path d="M318 33.500L338 39.500 318 46z" fill="#f00000"/>
      <path d="M390.500 90L380 425" stroke="#f00000" stroke-width="4"/>
      <path d="M373.500 423H385.500L378.500 442z" fill="#f00000"/>
      <rect x="322.500" y="445.500" width="83.500" height="27" rx="2" fill="none" stroke="#f00000" stroke-width="3.500"/>
    </svg>`;
  }
}
customElements.define("red-marks", RedMarks);
</script>
</body>
</html>
